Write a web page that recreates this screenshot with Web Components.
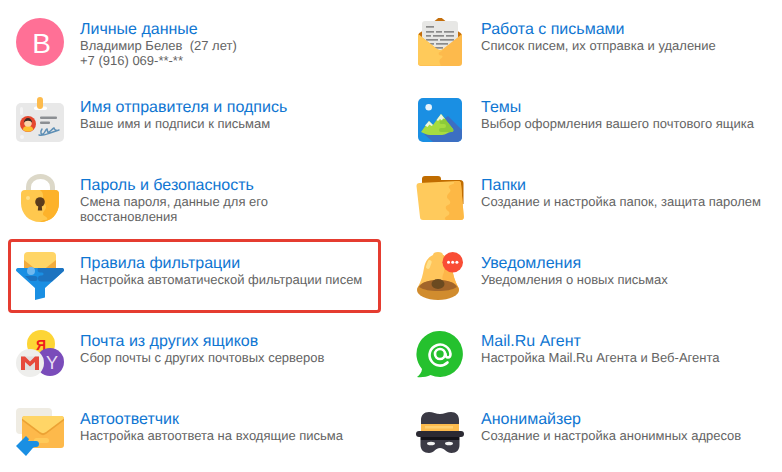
<!DOCTYPE html>
<html lang="ru">
<head>
<meta charset="utf-8">
<title>Настройки</title>
<style>
  html, body { margin: 0; background: #fff; }
  body { font-family: "Liberation Sans", Arial, sans-serif; }
  /* la colonne de droite a son texte un pixel plus loin */
  settings-item:nth-child(even) { --text-gap: 17px; }
</style>
</head>
<body>
<settings-list>
  <settings-item heading="Личные данные"><item-icon slot="icon" name="avatar"></item-icon>Владимир Белев&nbsp; (27 лет)<br>+7 (916) 069-**-**</settings-item>
  <settings-item heading="Работа с письмами"><item-icon slot="icon" name="letters"></item-icon>Список писем, их отправка и удаление</settings-item>
  <settings-item heading="Имя отправителя и подпись"><item-icon slot="icon" name="card"></item-icon>Ваше имя и подписи к письмам</settings-item>
  <settings-item heading="Темы"><item-icon slot="icon" name="themes"></item-icon>Выбор оформления вашего почтового ящика</settings-item>
  <settings-item heading="Пароль и безопасность"><item-icon slot="icon" name="lock"></item-icon>Смена пароля, данные для его восстановления</settings-item>
  <settings-item heading="Папки"><item-icon slot="icon" name="folder"></item-icon>Создание и настройка папок, защита паролем</settings-item>
  <settings-item heading="Правила фильтрации" marked><item-icon slot="icon" name="filter"></item-icon>Настройка автоматической фильтрации писем</settings-item>
  <settings-item heading="Уведомления"><item-icon slot="icon" name="bell"></item-icon>Уведомления о новых письмах</settings-item>
  <settings-item heading="Почта из других ящиков"><item-icon slot="icon" name="collect"></item-icon>Сбор почты с других почтовых серверов</settings-item>
  <settings-item heading="Mail.Ru Агент"><item-icon slot="icon" name="agent"></item-icon>Настройка Mail.Ru Агента и Веб-Агента</settings-item>
  <settings-item heading="Автоответчик"><item-icon slot="icon" name="reply"></item-icon>Настройка автоответа на входящие письма</settings-item>
  <settings-item heading="Анонимайзер"><item-icon slot="icon" name="anon"></item-icon>Создание и настройка анонимных адресов</settings-item>
</settings-list>

<script>
// les icones, toutes dans une boite de 48x48
const ICONS = {
  avatar: `
    <circle cx="24" cy="24" r="24" fill="#ff7096"/>
    <text x="25.500" y="35" text-anchor="middle" font-family="Liberation Sans, sans-serif" font-size="28" fill="#fff">В</text>`,
  card: `
    <rect x="0" y="7" width="48" height="39" rx="5" fill="#e8e8e8"/>
    <rect x="4" y="11" width="3" height="8" rx="1.500" fill="#f4f4f4"/>
    <circle cx="6" cy="41" r="2" fill="#f4f4f4"/>
    <rect x="18" y="10.500" width="13" height="3.500" rx="1.700" fill="#fff"/>
    <rect x="21" y="1" width="6" height="12" rx="3" fill="#fdbb4d"/>
    <circle cx="12" cy="28" r="8" fill="#e5482f"/>
    <path d="M6.500 33.500c1.500-3 3.500-4 5.500-4s4 1 5.500 4a8 8 0 0 1-11 0z" fill="#fdc02f"/>
    <circle cx="12" cy="27" r="3.800" fill="#fbd3a8"/>
    <path d="M7.800 27c0-3 2-5 4.200-5s4.200 2 4.200 5c-1-1.500-2-2.200-4.200-2.200s-3.200.7-4.200 2.200z" fill="#3b2a25"/>
    <rect x="24" y="20.500" width="17" height="2.500" rx="1" fill="#8c8f93"/>
    <rect x="24" y="25.500" width="10" height="2.500" rx="1" fill="#8c8f93"/>
    <path d="M23 39c4 1 8-1 11-2 3-1 6-2 9-3M26 33c-2 3-1 6 1 5 2-1 2-4 4-5 1 2 0 4 2 3 2-1 3-3 5-4 1 1 0 2 2 2" fill="none" stroke="#5e8fb5" stroke-width="1.500" stroke-linecap="round"/>`,
  lock: `
    <path d="M10 22V13a14.500 13 0 0 1 29 0v9h-5V13a9.500 8 0 0 0-19 0v9z" fill="#dcd8c8"/>
    <path d="M9 16h30a4 4 0 0 1 4 4v9c0 11-8 19-19 19S5 40 5 29v-9a4 4 0 0 1 4-4z" fill="#ffc84e"/>
    <path d="M24 16h15a4 4 0 0 1 4 4v9c0 11-8 19-19 19 1-1 3-2 5-2 2 0 3-1 2-2-1-2-4-2-4-4 0-3 3-4 3-7 0-3-3-4-3-7 0-4 1-7-3-10z" fill="#fdb22a"/>
    <circle cx="12" cy="24" r="2" fill="#ffe08a"/>
    <circle cx="24" cy="28" r="4.800" fill="#5a3b1c"/>
    <path d="M22.500 30h3l.7 6.500h-4.400z" fill="#5a3b1c"/>`,
  filter: `
    <path d="M8 18V4a4 4 0 0 1 4-4h24a4 4 0 0 1 4 4v14z" fill="#ffd566"/>
    <path d="M8 8l14 11h4L40 8v10H8z" fill="#f2ab3c"/>
    <path d="M2 16h44a2 2 0 0 1 1.500 3.300L29 36v9.500L19 48V36L.5 19.300A2 2 0 0 1 2 16z" fill="#1a8fe3"/>
    <path d="M22 16h24a2 2 0 0 1 1.500 3.300L36 29.500H25a3 3 0 0 1 0-6h1c2 0 2-3 0-3h-2c-2 0-3-2-2-4.500z" fill="#1c73c0"/>
    <path d="M9 24h10a2.500 2.500 0 0 1 0 5h-4.500z" fill="#1c73c0"/>
    <circle cx="15" cy="19" r="4" fill="#6fb8ef"/>`,
  collect: `
    <circle cx="25" cy="14" r="14" fill="#fdd535"/>
    <text x="25" y="19.500" text-anchor="middle" font-family="Liberation Sans, sans-serif" font-size="14" font-weight="700" fill="#f01c1c">Я</text>
    <circle cx="34" cy="32" r="14" fill="#7a4cba"/>
    <text x="36" y="39" text-anchor="middle" font-family="Liberation Sans, sans-serif" font-size="18" fill="#e8def5">Y</text>
    <circle cx="14" cy="33" r="14" fill="#eeeeec"/>
    <path d="M5 26.500h18V40H5z" fill="#dfdfdf"/>
    <path d="M5 26.500h4l5 5 5-5h4V40h-4v-8l-5 4.500L9 32v8H5z" fill="#e64a3d"/>`,
  reply: `
    <rect x="0" y="0" width="36" height="26" rx="4" fill="#efece3"/>
    <rect x="6" y="8" width="42" height="32" rx="3" fill="#fdb94b"/>
    <path d="M6 11a3 3 0 0 1 3-3h36a3 3 0 0 1 3 3v1L30 25a5 5 0 0 1-6 0L6 12z" fill="#ffd566"/>
    <path d="M6 10.500L24 24a5 5 0 0 0 6 0l18-13.500v2L30 26a5 5 0 0 1-6 0L6 12.500z" fill="#eca234"/>
    <rect x="18" y="30" width="15" height="5" rx="2.500" fill="#ffca5a"/>
    <path d="M0 38l10-10 3 3-1 2h8a3 3 0 0 1 0 6h-1c-2 0-2 1-3 2l-6 7z" fill="#1a8fe3"/>`,
  letters: `
    <path d="M2 18c0-2 1-3 3-4L21 1a4 4 0 0 1 6 0l16 13c2 1 3 2 3 4v6H2z" fill="#c46f0c"/>
    <rect x="6" y="3" width="36" height="38" rx="3" fill="#e7e7e5"/>
    <path d="M6 28h36v13H6z" fill="#efe6d8"/>
    <g fill="#8a8a8a">
      <rect x="10" y="8" width="8" height="1.700"/>
      <rect x="10" y="13" width="8" height="1.700"/><rect x="20" y="13" width="6" height="1.700"/><rect x="28" y="13" width="10" height="1.700"/>
      <rect x="10" y="17" width="5" height="1.700"/><rect x="17" y="17" width="11" height="1.700"/><rect x="30" y="17" width="8" height="1.700"/>
      <rect x="10" y="21" width="12" height="1.700"/><rect x="24" y="21" width="14" height="1.700"/>
      <rect x="10" y="25" width="8" height="1.700"/><rect x="20" y="25" width="12" height="1.700"/>
      <rect x="13" y="29" width="14" height="1.700"/><rect x="17" y="33" width="8" height="1.700" opacity=".6"/>
    </g>
    <path d="M2 16l19 15a5 5 0 0 0 6 0l19-15v29a3 3 0 0 1-3 3H5a3 3 0 0 1-3-3z" fill="#fdba4c"/>
    <path d="M2 16l19 15c1 .8 3 2 6 .5-1 2-3 2-4 3-1 1 0 3 2 3 2 0 2 2 0 3-2 1-2 4 0 7H5a3 3 0 0 1-3-3z" fill="#ffca5a"/>`,
  themes: `
    <rect x="2" y="2" width="44" height="44" rx="5" fill="#1a8fe3"/>
    <path d="M32 20l14 14v7a5 5 0 0 1-5 5H17L8 38z" fill="#3c6fc2"/>
    <circle cx="12.700" cy="11.300" r="3.300" fill="#e6f3fc"/>
    <path d="M5 36l8-11 4 4 8-11 12 15c1 2 0 3-2 3-3 0-5 3-9 3H14c-3 0-6-2-9-3z" fill="#a6dc40"/>
    <path d="M26 19l11 14c1 2 0 3-2 3H25a2 2 0 0 1 0-4h3a2 2 0 0 0 0-4h-3c-2 0-2-3 1-4-1-2 0-3 0-5z" fill="#8ccb3a"/>
    <path d="M13 25l4 4-1.500 1-2-1.500-2 2.500-2.500-1.500z" fill="#edf7e0"/>
    <path d="M25 18l4 5-2-.5-1 2-2-1.500-2 2-1.500-1z" fill="#edf7e0"/>`,
  folder: `
    <path d="M6 5a3 3 0 0 1 3-3h13a3 3 0 0 1 3 3v1h19a3.500 3.500 0 0 1 3.500 3.500V30H6z" fill="#c06c00"/>
    <path d="M.5 12a3 3 0 0 1 3-3L42 7a3 3 0 0 1 3 3l2.800 33a3 3 0 0 1-3 3H7a3 3 0 0 1-3-3z" fill="#ffca5c"/>
    <path d="M38 7.500L42 7a3 3 0 0 1 3 3l2.800 33a3 3 0 0 1-3 3H30c-2-1-1-3 1-4 3-1 3-4 1-5-3-2-3-5 0-6 3-1 3-4 0-6-2-2-1-4 1-6 2-2 2-3 0-5-1-3 2-3 5-4.500z" fill="#fdb845"/>`,
  bell: `
    <path d="M22 0c3 0 5 1 5 3 5 2 8 7 9 13 1 7 3 13 6 19 2 4 1 6-20 6S0 39 2 35c3-6 5-12 6-19 1-6 4-11 9-13 0-2 2-3 5-3z" fill="#ffc65c"/>
    <path d="M27 3c5 2 8 7 9 13 1 7 3 13 6 19 2 4 1 6-20 6-1-3 1-5 4-5 3 0 4-3 2-6-3-4-1-7 0-10 1-4-1-7-1-10 0-3 1-5 0-7z" fill="#fdb649"/>
    <rect x="11" y="8" width="4" height="9" rx="2" transform="rotate(20 13 12)" fill="#ffe08a"/>
    <ellipse cx="22" cy="38" rx="21" ry="10" fill="#d18c2e"/>
    <path d="M3 35c3-5 9-7 19-7s16 2 19 7c-5 3-11 4-19 4S8 38 3 35z" fill="#a2652a"/>
    <ellipse cx="22" cy="32" rx="6.500" ry="5" fill="#6b4a20"/>
    <circle cx="36.700" cy="10.300" r="10.300" fill="#f94d35"/>
    <circle cx="32.500" cy="10.300" r="1.500" fill="#fff"/><circle cx="36.700" cy="10.300" r="1.500" fill="#fff"/><circle cx="40.900" cy="10.300" r="1.500" fill="#fff"/>`,
  agent: `
    <path d="M24 1a23 23 0 1 1-9.500 44C11 47 5 47.500 1 47c2.500-2 4.800-4.500 5-8A23 23 0 0 1 24 1z" fill="#25c12e"/>
    <path d="M31.500 32.500A10.500 10.500 0 1 1 34.500 24c0 2-1 3.500-2.500 3.500s-2.500-1.500-2.500-3.500" fill="none" stroke="#fff" stroke-width="2.600" stroke-linecap="round"/>
    <circle cx="24" cy="24" r="5" fill="none" stroke="#fff" stroke-width="2.600"/>`,
  anon: `
    <path d="M5 24V12c0-5 3-8 8-8 4 0 7 2 11 2s7-2 11-2c5 0 8 3 8 8v12z" fill="#3b3a45"/>
    <rect x="5" y="16" width="38" height="7" fill="#fdbb4d"/>
    <rect x="9" y="18" width="28" height="2.500" fill="#ffcf70"/>
    <rect x="0" y="23" width="48" height="6" rx="3" fill="#2b2a33"/>
    <path d="M4.500 29h39v3H4.500z" fill="#131318"/>
    <path d="M4.500 32h39v5c0 5-3 8-8 8-5 0-7-5-11.500-5S18 45 13 45c-5 0-8.500-3-8.500-8z" fill="#3b3a45"/>
    <ellipse cx="15" cy="35.500" rx="4" ry="1.800" fill="#f2f2f2"/>
    <ellipse cx="33" cy="35.500" rx="4" ry="1.800" fill="#f2f2f2"/>`
};

class ItemIcon extends HTMLElement {
  connectedCallback() {
    this.attachShadow({ mode: 'open' }).innerHTML = `
      <style>
        :host { display: block; width: 48px; height: 48px; }
        svg { display: block; }
      </style>
      <svg width="48" height="48" viewBox="0 0 48 48">${ICONS[this.getAttribute('name')]}</svg>`;
  }
}

class SettingsItem extends HTMLElement {
  connectedCallback() {
    // marked = le cadre rouge autour de la ligne
    this.attachShadow({ mode: 'open' }).innerHTML = `
      <style>
        :host {
          display: flex;
          position: relative;
          gap: var(--text-gap, 16px);
          padding: 18px 0 0 16px;
          box-sizing: border-box;
          height: 78px;
        }
        .frame {
          display: none;
          position: absolute;
          left: 8px; top: 5px; width: 373px; height: 74px;
          box-sizing: border-box;
          border: 3px solid #e53c30;
          border-radius: 4px;
        }
        :host([marked]) .frame { display: block; }
        .text { width: 286px; padding-top: 3px; text-rendering: geometricPrecision; }
        h3 {
          margin: 0;
          font: 400 16px/17px "Liberation Sans", Arial, sans-serif;
          color: #0f76d2;
        }
        p {
          margin: 0;
          font: 400 13px/15px "Liberation Sans", Arial, sans-serif;
          color: #636363;
        }
      </style>
      <slot name="icon"></slot>
      <div class="text">
        <h3>${this.getAttribute('heading')}</h3>
        <p><slot></slot></p>
      </div>
      <div class="frame"></div>`;
  }
}

class SettingsList extends HTMLElement {
  constructor() {
    super();
    this.attachShadow({ mode: 'open' }).innerHTML = `
      <style>
        :host { display: grid; grid-template-columns: 400px 1fr; }
      </style>
      <slot></slot>`;
  }
}

customElements.define('item-icon', ItemIcon);
customElements.define('settings-item', SettingsItem);
customElements.define('settings-list', SettingsList);
</script>
</body>
</html>
